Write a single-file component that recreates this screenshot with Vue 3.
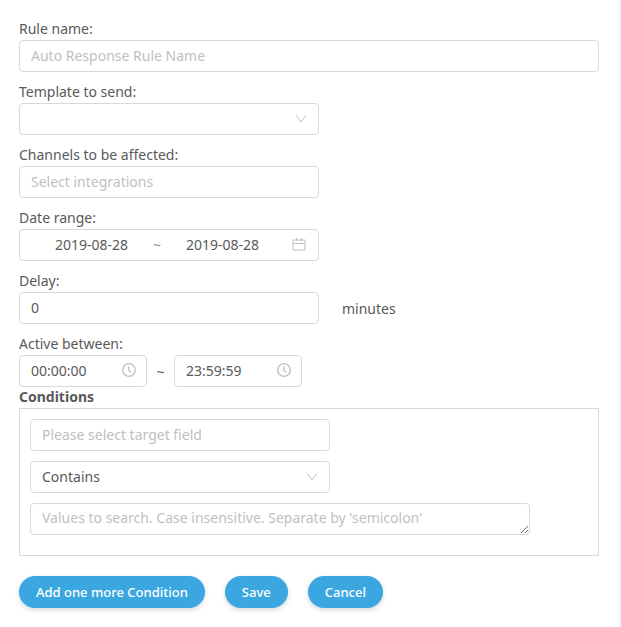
<script setup>
import { ref } from 'vue'

const ruleName = ref('')
const template = ref('')
const channels = ref('')
const startDate = ref('2019-08-28')
const endDate = ref('2019-08-28')
const delay = ref('0')
const startTime = ref('00:00:00')
const endTime = ref('23:59:59')
const conditions = ref([{ field: '', operator: 'Contains', values: '' }])

function addCondition() {
  conditions.value.push({ field: '', operator: 'Contains', values: '' })
}
</script>

<template>
  <main class="page">
    <form class="form" @submit.prevent>
      <div class="group">
        <label for="rule-name">Rule name:</label>
        <input id="rule-name" v-model="ruleName" class="control" type="text" placeholder="Auto Response Rule Name" />
      </div>

      <div class="group">
        <label for="template">Template to send:</label>
        <div class="picker medium">
          <select id="template" v-model="template" class="control">
            <option value=""></option>
          </select>
          <svg class="arrow" viewBox="0 0 12 12" aria-hidden="true"><path d="M1.2 2.2 6 9l4.800-6.800" /></svg>
        </div>
      </div>

      <div class="group">
        <label for="channels">Channels to be affected:</label>
        <input id="channels" v-model="channels" class="control medium" type="text" placeholder="Select integrations" />
      </div>

      <div class="group">
        <label for="start-date">Date range:</label>
        <div class="control medium range">
          <input id="start-date" v-model="startDate" type="text" />
          <span class="tilde">~</span>
          <input v-model="endDate" type="text" aria-label="End date" />
          <svg class="calendar" viewBox="0 0 14 14" aria-hidden="true">
            <path d="M1 3h12v10H1zM1 6.500h12M4.500 1v3M9.500 1v3" />
          </svg>
        </div>
      </div>

      <div class="group">
        <label for="delay">Delay:</label>
        <div class="row delay">
          <input id="delay" v-model="delay" class="control medium" type="text" />
          <span>minutes</span>
        </div>
      </div>

      <div class="group last">
        <label for="start-time">Active between:</label>
        <div class="row">
          <div class="control time">
            <input id="start-time" v-model="startTime" type="text" />
            <svg class="clock" viewBox="0 0 14 14" aria-hidden="true">
              <circle cx="7" cy="7" r="6.300" /><path d="M6.800 3.200v4.300l2.600 1.900" />
            </svg>
          </div>
          <span class="between">~</span>
          <div class="control time">
            <input v-model="endTime" type="text" aria-label="End time" />
            <svg class="clock" viewBox="0 0 14 14" aria-hidden="true">
              <circle cx="7" cy="7" r="6.300" /><path d="M6.800 3.200v4.300l2.600 1.900" />
            </svg>
          </div>
        </div>
      </div>

      <h2>Conditions</h2>
      <div class="conditions">
        <div v-for="(condition, i) in conditions" :key="i" class="condition">
          <input v-model="condition.field" class="control medium" type="text" aria-label="Target field" placeholder="Please select target field" />
          <div class="picker medium">
            <select v-model="condition.operator" class="control" aria-label="Operator">
              <option>Contains</option>
            </select>
            <svg class="arrow" viewBox="0 0 12 12" aria-hidden="true"><path d="M1.2 2.2 6 9l4.800-6.800" /></svg>
          </div>
          <textarea v-model="condition.values" class="control wide" rows="1" aria-label="Values" placeholder="Values to search. Case insensitive. Separate by 'semicolon'"></textarea>
        </div>
      </div>

      <div class="actions">
        <button type="button" @click="addCondition">Add one more Condition</button>
        <button type="submit">Save</button>
        <button type="button">Cancel</button>
      </div>
    </form>
  </main>
</template>

<style>
body {
  background: #fff;
}
</style>

<style scoped>
.page {
  box-sizing: border-box;
  min-height: 100vh;
  padding: 19px 20px 19px 19px;
  border-right: 2px solid #f0f2f8;
  color: #595959;
  font: 14px/21px "Noto Sans", sans-serif;
}

.group {
  display: flex;
  flex-direction: column;
  margin-bottom: 10px;
}

.group.last {
  margin-bottom: 0;
}

label,
h2 {
  padding-bottom: 2px;
  line-height: 19px;
}

.control {
  box-sizing: border-box;
  width: 100%;
  height: 32px;
  margin: 0;
  padding: 3px 11px 5px;
  border: 1px solid #d9d9d9;
  border-radius: 4px;
  background: #fff;
  color: inherit;
  font: inherit;
  outline: none;
}

.control:focus,
.control:focus-within {
  border-color: #3aa7e1;
}

.medium {
  width: 100%;
  max-width: 300px;
}

.wide {
  max-width: 500px;
}

::placeholder {
  color: #bfbfbf;
  opacity: 1;
}

select.control {
  appearance: none;
}

.picker {
  display: grid;
  align-items: center;
}

.picker > * {
  grid-area: 1 / 1;
}

svg {
  fill: none;
  stroke: #bfbfbf;
  flex: none;
}

.arrow {
  justify-self: end;
  width: 12px;
  height: 12px;
  margin-right: 12px;
  pointer-events: none;
}

.range,
.time {
  display: flex;
  align-items: center;
}

.range input,
.time input {
  min-width: 0;
  padding: 0;
  border: 0;
  background: none;
  color: inherit;
  font: inherit;
  outline: none;
}

.range {
  padding-right: 12px;
}

.range input {
  width: 44%;
  text-align: center;
}

.tilde {
  width: 10px;
  color: #8c8c8c;
  text-align: center;
}

.calendar {
  width: 14px;
  height: 14px;
  margin-left: auto;
}

.row {
  display: flex;
  align-items: center;
}

.delay {
  gap: 23px;
}

.between {
  width: 27px;
  text-align: center;
}

.time {
  width: 128px;
  padding-right: 10px;
}

.time input {
  flex: 1;
}

.clock {
  width: 14px;
  height: 14px;
  stroke-width: 1.3;
}

h2 {
  margin: 0;
  font-size: 14px;
  font-weight: 700;
}

.conditions {
  padding: 10px 10px 20px;
  border: 1px solid #d9d9d9;
}

.condition {
  display: flex;
  flex-direction: column;
  gap: 10px;
}

.condition + .condition {
  margin-top: 20px;
}

textarea {
  resize: vertical;
}

.actions {
  display: flex;
  flex-wrap: wrap;
  gap: 20px;
  margin-top: 20px;
}

button {
  height: 32px;
  padding: 0 17px;
  border: 0;
  border-radius: 16px;
  background: #3aa7e1;
  box-shadow: 0 2px 5px rgba(0, 0, 0, 0.16);
  color: #fff;
  font: 500 13px/21px "Noto Sans", sans-serif;
  cursor: pointer;
}
</style>
